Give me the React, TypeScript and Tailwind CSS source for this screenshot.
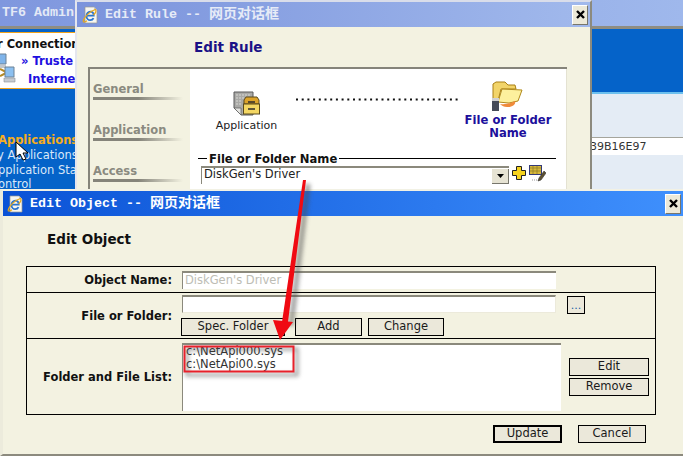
const verdana = "font-['DejaVu_Sans',sans-serif]";
const titleFont = "font-['Liberation_Mono','Noto_Sans_CJK_SC',monospace]";

function IeIcon() {
  return (
    <svg width="17" height="18" viewBox="0 0 17 18" className="shrink-0">
      <path d="M3 1h9l3 3v13H3z" fill="#f7f6ef" stroke="#9a9a94" strokeWidth="0.7" />
      <path d="M12 1l3 3h-3z" fill="#c9c9c4" />
      <path d="M4.8 9.6h6.9c0-2.4-1.4-3.9-3.4-3.9-2.2 0-3.8 1.8-3.8 4.2s1.6 4.3 3.8 4.3c1.5 0 2.6-.7 3.2-2" fill="none" stroke="#2a74cf" strokeWidth="1.8" />
      <path d="M1 15.5C2 11 8 5 13.5 3.5c1.5 2-1 4.5-2 5.5M1 15.5c1 1 3 0 4-.7" fill="none" stroke="#e9a91a" strokeWidth="1.2" />
    </svg>
  );
}

function CloseButton() {
  return (
    <div className="flex h-[20px] w-[16px] items-center justify-center border border-t-white border-l-white border-r-[#77766c] border-b-[#77766c] bg-[#ece9d8]">
      <svg width="9" height="9" viewBox="0 0 9 9">
        <path d="M1 1l7 7M8 1L1 8" stroke="#000" strokeWidth="2.4" />
      </svg>
    </div>
  );
}

function Inset({ className }: { className: string }) {
  return <div className={`bg-white border-t-2 border-l border-t-[#8b897c] border-l-[#8b897c] border-b border-r border-b-[#eceadb] border-r-[#eceadb] ${className}`} />;
}

function FlatButton({ label, className }: { label: string; className: string }) {
  return (
    <div className={`flex items-center justify-center h-[18px] bg-[#ebe8da] border-black text-[11.5px] leading-none text-[#1a1a1a] ${verdana} ${className}`}>
      {label}
    </div>
  );
}

function NetworkIcon() {
  return (
    <svg width="16" height="31" viewBox="0 0 16 31" className="absolute left-0 top-[20px]">
      <path d="M-2 1h8v10h-8z" fill="#7fb4ea" stroke="#6d8296" />
      <path d="M-2 12h8v3h-8z" fill="#c2c7cc" />
      <path d="M0 16l6 3M0 23l6-3" stroke="#b58a24" strokeWidth="2" />
      <path d="M5 14h9v10H5z" fill="#8cc0f0" stroke="#6d8296" />
      <path d="M4 25h11v4H4z" fill="#c6cbd0" stroke="#8a9298" strokeWidth="0.6" />
    </svg>
  );
}

function BackWindow() {
  return (
    <div className="absolute inset-0 flex flex-col bg-[#0563c9]">
      <div className={`h-[26px] shrink-0 bg-gradient-to-r from-[#7f97de] to-[#9fb8ec] pl-[2px] pt-[5px] text-[13.33px] font-bold leading-[16px] text-[#e4e9f6] ${titleFont}`}>
        TF6 Admin
      </div>
      <div className="h-[3px] shrink-0 bg-[#8f8d82]" />
      <div className="flex flex-1 justify-between">
        <div className={`w-[76px] overflow-hidden whitespace-nowrap ${verdana}`}>
          <div className="relative mt-[3px] h-[57px] border-y border-[#f2a31c] bg-white">
            <div className="absolute left-0 top-[4px] -ml-[3px] text-[11.5px] font-bold leading-[14px] text-[#111]">r Connection</div>
            <div className="absolute left-[21px] top-[21px] text-[11.5px] font-bold leading-[14px] text-[#1d0fe0]">» Truste</div>
            <div className="absolute left-[28px] top-[39px] text-[11.5px] font-bold leading-[14px] text-[#1d0fe0]">Interne</div>
            <NetworkIcon />
          </div>
          <div className="mt-[44px] text-[11.5px] leading-[14px]">
            <div className="-ml-[2px] font-bold text-[#f6ad20]">Applications</div>
            <div className="-ml-[3px] mt-[1px] text-[#dbe8f8]">y Applications</div>
            <div className="-ml-[2px] mt-[1px] text-[#dbe8f8]">pplication Star</div>
            <div className="-ml-[2px] text-[#dbe8f8]">ontrol</div>
          </div>
        </div>
        <div className="flex w-[92px] flex-col">
          <div className="h-[65px] shrink-0 border-b-2 border-[#6cc0ee]" />
          <div className="h-[44px] shrink-0 border-b border-[#a5a59c] bg-[#e4ecf5]" />
          <div className={`h-[17px] shrink-0 overflow-hidden bg-white text-[11px] leading-[18px] text-[#333] ${verdana}`}>
            <span className="-ml-[1px] block">39B16E97</span>
          </div>
          <div className="flex-1 bg-[#e4ecf5]" />
        </div>
      </div>
    </div>
  );
}

function SideTab({ label }: { label: string }) {
  return (
    <div className="h-[41px]">
      <div className={`text-[11.5px] font-bold leading-[14px] text-[#8a8a80] ${verdana}`}>{label}</div>
      <div className="mt-[1px] h-[3px] w-[90px] bg-gradient-to-r from-[#85847a] via-[#85847a] to-transparent" />
    </div>
  );
}

function AppIcon() {
  return (
    <svg width="27" height="26" viewBox="0 0 27 26">
      <path d="M1 1h19v23H8l-7-7z" fill="#a9a9a6" stroke="#5a5a5a" />
      <path d="M1 17h7v7z" fill="#e4e4e0" stroke="#5a5a5a" strokeWidth="0.7" />
      <path d="M3 4h15M3 7h15M3 10h6M3 13h6" stroke="#d8d8d4" strokeDasharray="2 1" />
      <path d="M11 9l2-3h11l2 3v4H11z" fill="#dca32a" stroke="#5a4a1c" />
      <rect x="10.5" y="13" width="16" height="10" fill="#f4d763" stroke="#5a4a1c" />
      <path d="M15 11h7M15 18h7" stroke="#2c2c2c" strokeWidth="1.3" />
    </svg>
  );
}

function FolderIcon() {
  return (
    <svg width="31" height="30" viewBox="0 0 31 30" className="-ml-[1px]">
      <path d="M1 21V3l3-2h9l3 3h7l1 4H9L6 20z" fill="#f2d469" stroke="#a97f14" />
      <path d="M6 21L10 8l20 1-4 11-9 2z" fill="#fdf09d" stroke="#b18a1c" />
      <path d="M8 23c6 1 11-1 15-3 1 3-2 6-8 6-3 0-5-1-7-3z" fill="#ef8a3a" />
      <rect x="0" y="18" width="7" height="12" fill="#454b58" />
      <rect x="0" y="17" width="7" height="3" fill="#d0d0d0" />
    </svg>
  );
}

function PlusIcon() {
  return (
    <svg width="14" height="14" viewBox="0 0 14 14">
      <path d="M4.5 .5h5v4h4v5h-4v4h-5v-4h-4v-5h4z" fill="#f6d31e" stroke="#222" />
    </svg>
  );
}

function PencilIcon() {
  return (
    <svg width="17" height="17" viewBox="0 0 17 17">
      <rect x="0.5" y="0.5" width="12" height="9" fill="#d8b83a" stroke="#333a78" />
      <path d="M1 3h11M1 6h11M4 1v8M8 1v8" stroke="#8a7a2a" strokeWidth="0.7" />
      <path d="M15 6l2 2-5 7-3 1 1-3z" fill="#5c5030" stroke="#333" strokeWidth="0.6" />
      <path d="M3 15h6" stroke="#999" strokeDasharray="1 1" />
    </svg>
  );
}

function EditRuleDialog() {
  return (
    <div className="absolute left-[75px] top-0 h-[190px] w-[517px] overflow-hidden border-x-2 border-t-2 border-l-[#e4e6ee] border-r-[#8c8a7e] border-t-[#d9ddea] bg-[#f3f2e1]">
      <div className={`flex h-[25px] items-center justify-between bg-gradient-to-r from-[#7b93dc] to-[#a1b9ec] pl-[5px] pr-[2px] ${titleFont}`}>
        <div className="flex items-center gap-[6px] text-[13.33px] font-bold text-[#e6ebf7]">
          <IeIcon />
          <span className="whitespace-pre">
            Edit Rule -- <span className="text-[14px]">网页对话框</span>
          </span>
        </div>
        <CloseButton />
      </div>
      <div className={`pl-[117px] pt-[12px] text-[13.5px] font-bold leading-[17px] text-[#1b1286] ${verdana}`}>Edit Rule</div>
      <div className="ml-[11px] mt-[11px] flex h-[130px] w-[479px] border-l-2 border-t-2 border-[#85847a]">
        <div className="w-[100px] shrink-0 pl-[3px] pt-[13px]">
          <SideTab label="General" />
          <SideTab label="Application" />
          <SideTab label="Access" />
        </div>
        <div className="flex-1 border-r border-[#e4e2d2] bg-white">
          <div className="flex h-[76px] items-start pt-[13px]">
            <div className={`ml-[26px] flex w-[60px] flex-col items-center pt-[9px] text-[11px] leading-[13px] text-[#222] ${verdana}`}>
              <AppIcon />
              <span className="mt-[2px] -mr-[1px]">Application</span>
            </div>
            <svg width="162" height="3" viewBox="0 0 162 3" className="ml-[20px] mt-[16px] shrink-0">
              <path d="M0 1.5H162" stroke="#111" strokeWidth="2" strokeDasharray="2 3.7" />
            </svg>
            <div className={`-mt-[1px] ml-[1px] flex w-[98px] flex-col items-center text-center text-[11.6px] font-bold leading-[13px] text-[#1c0f9c] ${verdana}`}>
              <FolderIcon />
              <span className="mt-[3px]">File or Folder<br />Name</span>
            </div>
          </div>
          <div className="relative ml-[8px] mt-[13px] h-0 w-[358px] border-t border-black">
            <span className={`absolute left-[9px] -top-[7px] bg-white px-[2px] text-[11.6px] font-bold leading-[14px] text-[#111] ${verdana}`}>File or Folder Name</span>
          </div>
          <div className="ml-[11px] mt-[7px] flex items-start gap-[3px]">
            <div className={`flex h-[18px] w-[308px] items-center justify-between border-l border-t-2 border-[#8b897c] bg-white pl-[2px] text-[11.5px] leading-none text-[#222] ${verdana}`}>
              <span className="-mt-[2px]">DiskGen's Driver</span>
              <div className="flex h-[15px] w-[17px] items-center justify-center border-b border-r border-[#77766c] bg-[#e6e3d3]">
                <svg width="7" height="4" viewBox="0 0 7 4"><path d="M0 0h7L3.5 4z" fill="#000" /></svg>
              </div>
            </div>
            <PlusIcon />
            <div className="-mt-[1px]"><PencilIcon /></div>
          </div>
        </div>
      </div>
    </div>
  );
}

function FormLabel({ text }: { text: string }) {
  return (
    <div className={`w-[146px] shrink-0 pr-[1px] text-right text-[11.5px] font-bold leading-[14px] text-[#111] ${verdana}`}>{text}</div>
  );
}

function EditObjectDialog() {
  return (
    <div className="absolute inset-x-0 bottom-0 top-[189px] flex flex-col border-b-2 border-l-[3px] border-t-2 border-b-[#8c8a7e] border-l-[#ecebdc] border-t-[#f2f1e4] bg-[#f3f2e1]">
      <div className={`flex h-[25px] shrink-0 items-center justify-between bg-gradient-to-r from-[#0a52d6] to-[#3f90fd] pl-[4px] pr-[2px] ${titleFont}`}>
        <div className="flex items-center gap-[6px] text-[13.33px] font-bold text-white">
          <IeIcon />
          <span className="whitespace-pre">
            Edit Object -- <span className="text-[14px]">网页对话框</span>
          </span>
        </div>
        <CloseButton />
      </div>
      <div className={`pl-[44px] pt-[15px] text-[13.5px] font-bold leading-[16px] text-[#111] ${verdana}`}>Edit Object</div>
      <div className="ml-[23px] mt-[19px] w-[630px] border border-black">
        <div className="flex h-[26px] items-center border-b border-black">
          <FormLabel text="Object Name:" />
          <div className={`ml-[9px] flex h-[18px] w-[374px] items-center border-l border-t-2 border-l-[#8b897c] border-t-[#8b897c] bg-white pl-[2px] text-[11.5px] leading-none text-[#bdbdb5] ${verdana}`}>
            DiskGen's Driver
          </div>
        </div>
        <div className="flex h-[46px] items-center border-b border-black">
          <FormLabel text="File or Folder:" />
          <div className="ml-[8px] flex w-[404px] flex-col gap-[4px]">
            <div className="flex items-start">
              <Inset className="ml-[1px] h-[18px] w-[374px]" />
              <div className={`ml-[11px] mt-[1px] flex h-[18px] w-[18px] items-center justify-center border border-black bg-[#ebe8da] text-[11px] leading-none text-[#1b5fa8] ${verdana}`}>...</div>
            </div>
            <div className="flex gap-[10px]">
              <FlatButton label="Spec. Folder" className="w-[104px] border" />
              <div className="flex gap-[6px]">
                <FlatButton label="Add" className="w-[67px] border" />
                <FlatButton label="Change" className="w-[76px] border" />
              </div>
            </div>
          </div>
        </div>
        <div className="flex h-[75px] items-center">
          <FormLabel text="Folder and File List:" />
          <div className={`ml-[9px] mt-[1px] h-[68px] w-[379px] border-l border-t-2 border-l-[#8b897c] border-t-[#8b897c] bg-white pl-[3px] text-[11.5px] leading-[13px] text-[#333] ${verdana}`}>
            <div>c:\NetApi000.sys</div>
            <div>c:\NetApi00.sys</div>
          </div>
          <div className="ml-[8px] flex flex-col gap-[2px]">
            <FlatButton label="Edit" className="w-[80px] border" />
            <FlatButton label="Remove" className="w-[80px] border" />
          </div>
        </div>
      </div>
      <div className="ml-[490px] mt-[10px] flex gap-[16px]">
        <FlatButton label="Update" className="w-[69px] border-2" />
        <FlatButton label="Cancel" className="w-[68px] border" />
      </div>
    </div>
  );
}

function Cursor() {
  return (
    <svg width="14" height="20" viewBox="0 0 14 20" className="absolute left-[15px] top-[141px]">
      <path d="M1 1v15l4-3 3 6 3-1-3-6h5z" fill="#fff" stroke="#000" />
    </svg>
  );
}

function Callout() {
  return (
    <svg width="683" height="456" viewBox="0 0 683 456" className="pointer-events-none absolute inset-0">
      <defs>
        <filter id="shadow" x="-20%" y="-20%" width="140%" height="140%">
          <feGaussianBlur stdDeviation="2" />
        </filter>
      </defs>
      <g filter="url(#shadow)" stroke="#4b4b4b" opacity="0.55">
        <path d="M308 184L291 326" strokeWidth="5" fill="none" />
        <rect x="187" y="349" width="110" height="26" strokeWidth="3" fill="none" />
      </g>
      <path d="M303 180L306 180L288 322L282 322z" fill="#f00a12" />
      <path d="M280 340L273 320L293 322z" fill="#f00a12" />
      <rect x="184.5" y="346.5" width="109" height="25" fill="none" stroke="#e8202a" strokeWidth="2" />
    </svg>
  );
}

export default function App() {
  return (
    <div className="relative h-[456px] w-[683px] overflow-hidden">
      <BackWindow />
      <Cursor />
      <EditRuleDialog />
      <EditObjectDialog />
      <Callout />
    </div>
  );
}
